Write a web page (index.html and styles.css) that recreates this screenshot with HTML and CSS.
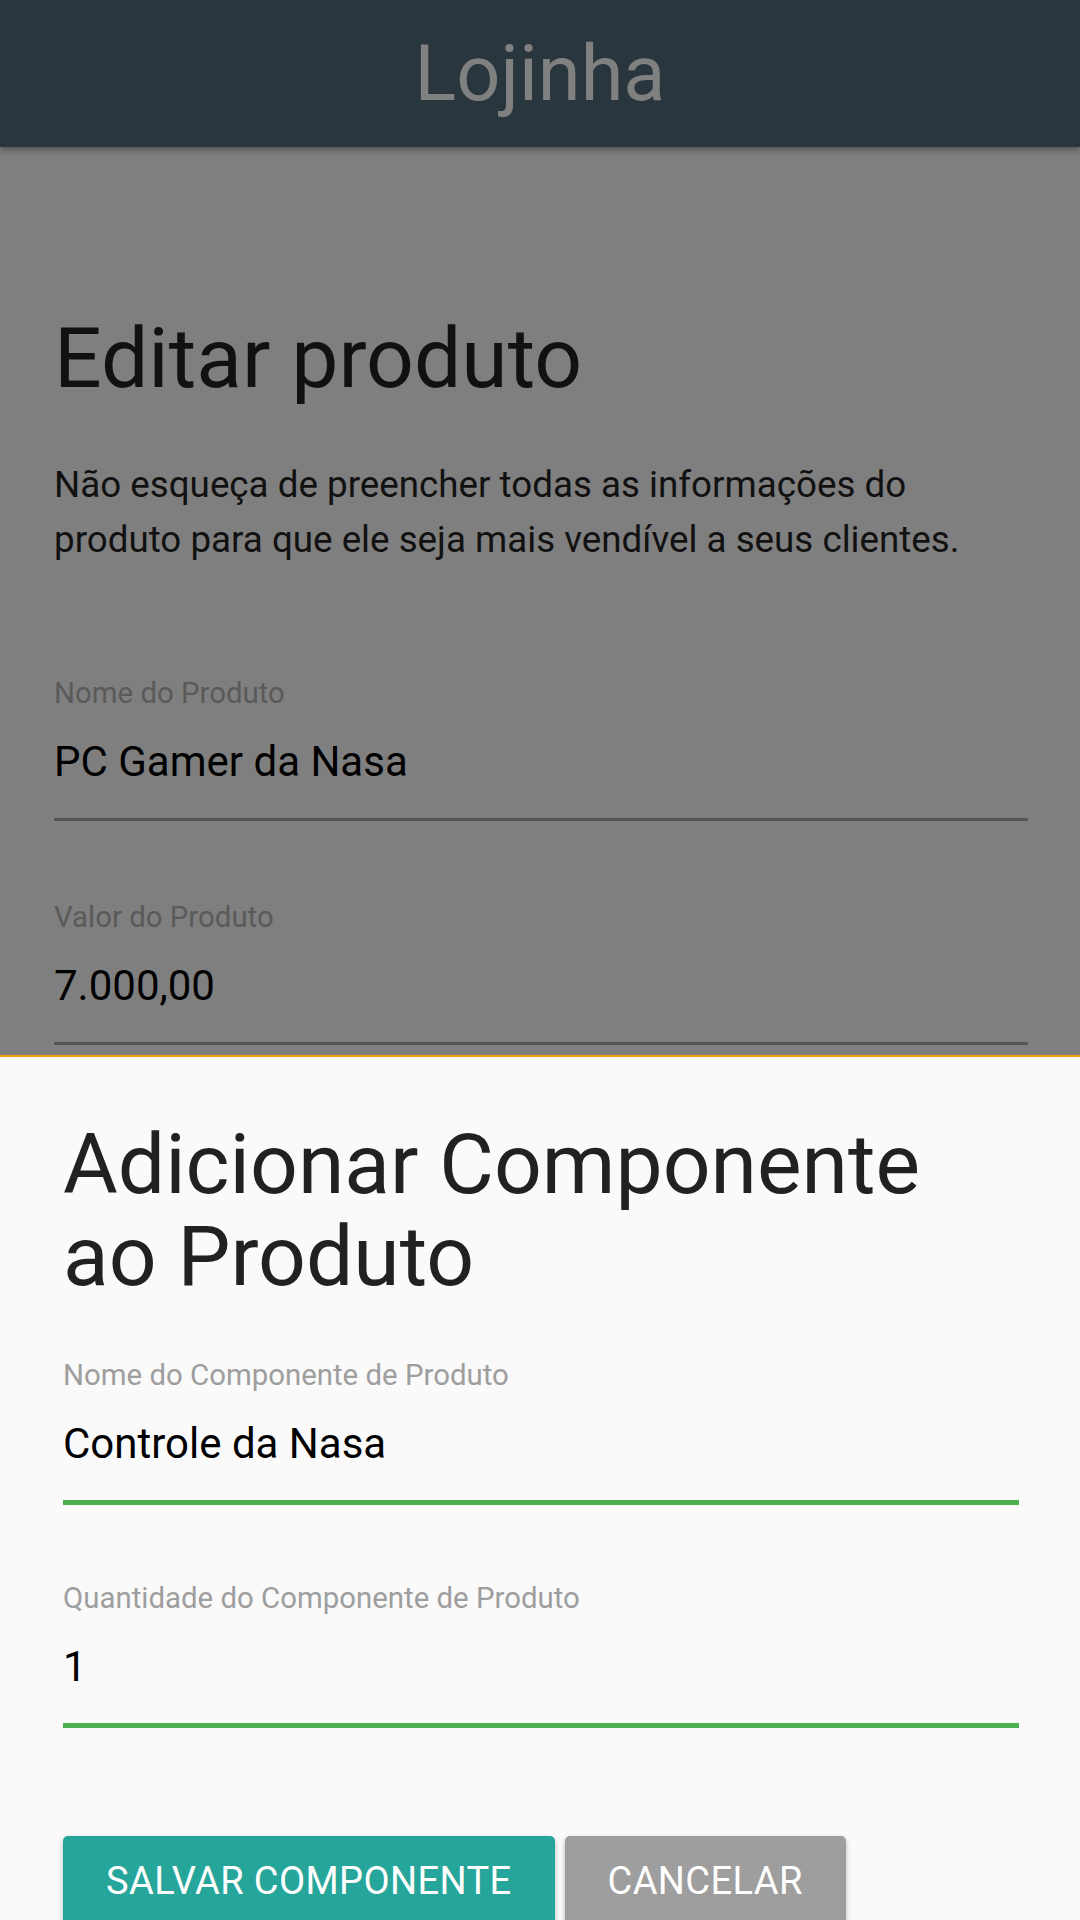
FILE: index.html
```html
<!DOCTYPE html>
<html lang="pt-BR">
<head>
<meta charset="utf-8">
<title>Lojinha</title>
<link rel="stylesheet" href="styles.css">
</head>
<body>
<header class="appbar">
  <h1 class="appbar-title">Lojinha</h1>
</header>
<main class="page">
  <h2 class="page-title">Editar produto</h2>
  <p class="page-intro">Não esqueça de preencher todas as informações do produto para que ele seja mais vendível a seus clientes.</p>
  <div class="field field-first">
    <div class="field-label">Nome do Produto</div>
    <div class="field-value">PC Gamer da Nasa</div>
  </div>
  <div class="field field-second">
    <div class="field-label">Valor do Produto</div>
    <div class="field-value">7.000,00</div>
  </div>
</main>
<section class="sheet">
  <h2 class="sheet-title">Adicionar Componente ao Produto</h2>
  <div class="field sheet-field sheet-field-first">
    <div class="field-label">Nome do Componente de Produto</div>
    <div class="field-value">Controle da Nasa</div>
  </div>
  <div class="field sheet-field sheet-field-second">
    <div class="field-label">Quantidade do Componente de Produto</div>
    <div class="field-value">1</div>
  </div>
  <div class="actions">
    <button class="btn btn-primary">SALVAR COMPONENTE</button>
    <button class="btn btn-secondary">CANCELAR</button>
  </div>
</section>
</body>
</html>
```
FILE: styles.css
```css
* {
  box-sizing: border-box;
}

html, body {
  margin: 0;
  padding: 0;
}

body {
  width: 1080px;
  height: 1920px;
  overflow: hidden;
  background: #7f7f7f;
  font-family: Roboto, "Noto Sans", "Liberation Sans", sans-serif;
  position: relative;
}

.appbar {
  position: relative;
  z-index: 2;
  height: 147px;
  padding-top: 30px;
  background: #2a363d;
  box-shadow: 0 3px 6px rgba(0, 0, 0, 0.35);
  text-align: center;
}

.appbar-title {
  margin: 0;
  font-size: 77.5px;
  line-height: 88px;
  font-weight: 400;
  color: #808080;
}

.page {
  padding: 0 52px 0 54px;
}

.page-title {
  margin: 162px 0 0;
  font-size: 84px;
  line-height: 100px;
  font-weight: 400;
  color: #111111;
}

.page-intro {
  margin: 48px 0 0;
  font-size: 36.75px;
  line-height: 55px;
  color: #111111;
}

.field-label {
  font-size: 29.4px;
  line-height: 34px;
  color: #5a5a5a;
}

.field-value {
  margin-top: 27px;
  padding-bottom: 31px;
  font-size: 42px;
  line-height: 50px;
  color: #000000;
  border-bottom: 3px solid #555555;
}

.field-first {
  margin-top: 109px;
}

.field-second {
  margin-top: 79px;
}

.sheet {
  position: absolute;
  left: 0;
  right: 0;
  top: 1055px;
  bottom: 0;
  z-index: 3;
  overflow: hidden;
  background: #fafafa;
  border-top: 2px solid #f0a30a;
  padding: 0 61px 0 63px;
}

.sheet-title {
  margin: 62px 0 0;
  font-size: 84px;
  line-height: 92px;
  font-weight: 400;
  color: #212121;
}

.sheet-field .field-label {
  color: #9e9e9e;
}

.sheet-field .field-value {
  border-bottom: 5px solid #4caf50;
}

.sheet-field-first {
  margin-top: 55px;
}

.sheet-field-second {
  margin-top: 76px;
}

.actions {
  display: flex;
  gap: 10px;
  margin-top: 108px;
}

.btn {
  border: none;
  border-radius: 5px;
  padding: 23px 43px;
  font-family: Roboto, "Noto Sans", "Liberation Sans", sans-serif;
  font-size: 38px;
  line-height: 44px;
  letter-spacing: 0.4px;
  font-weight: 400;
  color: #ffffff;
  box-shadow: 0 2px 5px rgba(0, 0, 0, 0.26);
  white-space: nowrap;
}

.btn-primary {
  background: #26a69a;
}

.btn-secondary {
  background: #9e9e9e;
}
```
